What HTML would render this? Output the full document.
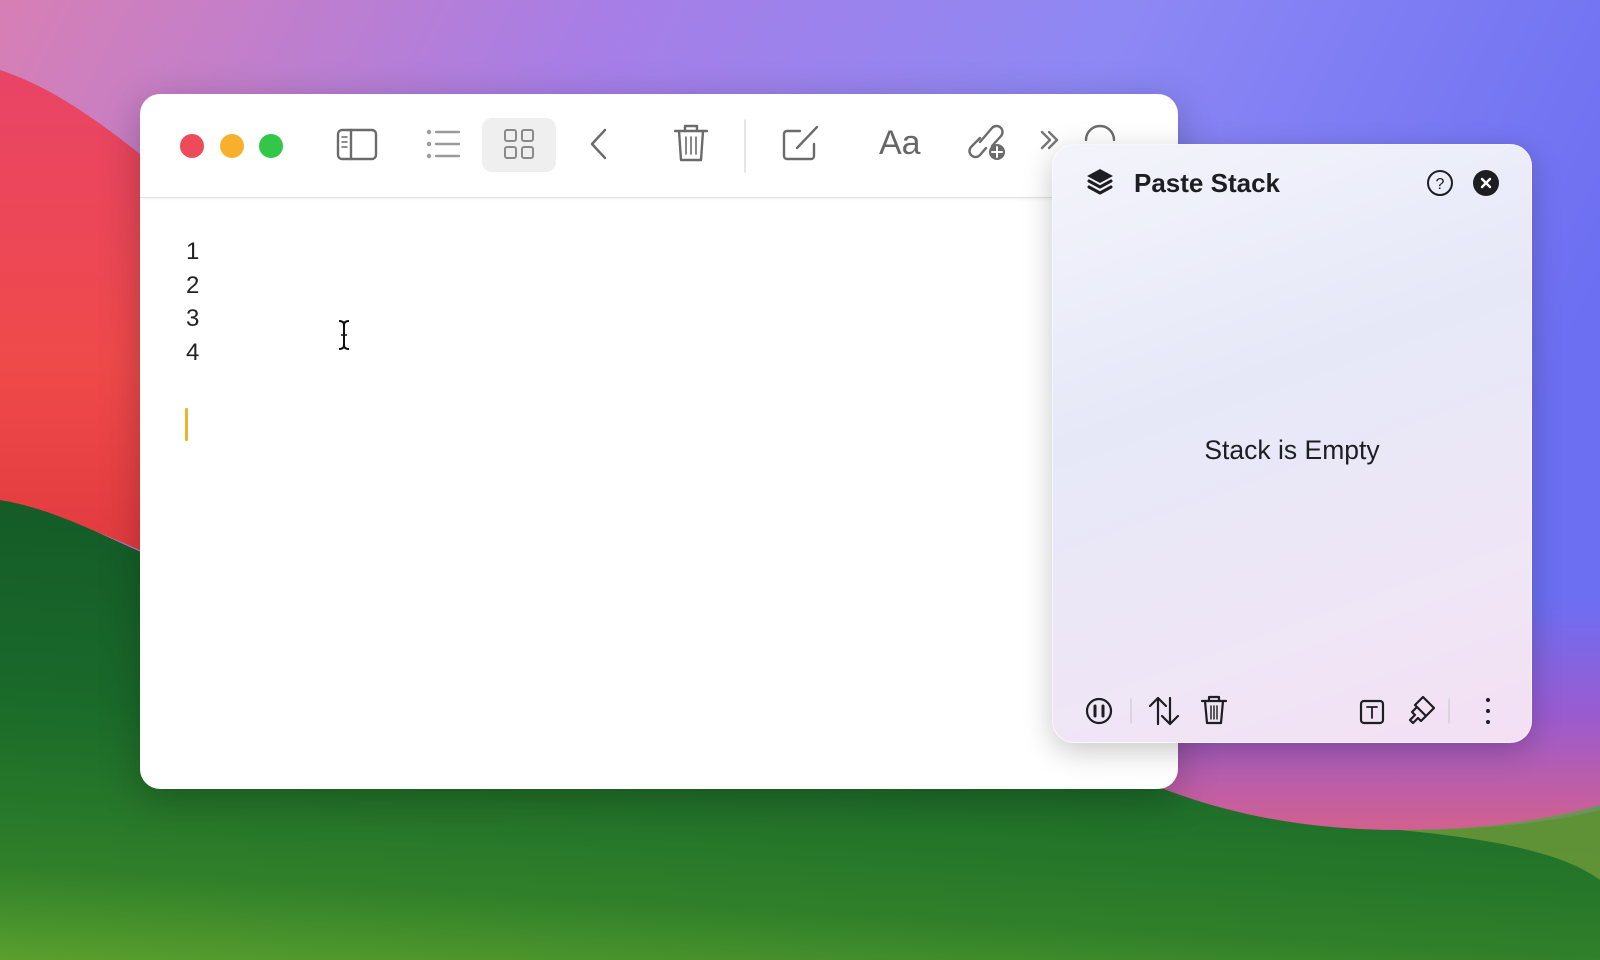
<!DOCTYPE html>
<html><head><meta charset="utf-8">
<style>
*{margin:0;padding:0;box-sizing:border-box}
html,body{width:1600px;height:960px;overflow:hidden;font-family:"Liberation Sans",sans-serif}
.bg{position:absolute;left:0;top:0}
.win{position:absolute;left:140px;top:94px;width:1038px;height:695px;background:#fff;border-radius:20px;box-shadow:0 10px 40px rgba(0,0,0,.25);overflow:hidden}
.tb{position:absolute;left:0;top:0;width:100%;height:104px;border-bottom:1px solid #e2e2e2;box-shadow:0 1px 3px rgba(0,0,0,.06)}
.dot{position:absolute;top:40px;width:24px;height:24px;border-radius:50%}
.num{position:absolute;left:46px;font-size:24px;color:#222}
.panel{position:absolute;left:1052px;top:144px;width:480px;height:599px;border-radius:22px;background:linear-gradient(160deg,#f3f4fb 0%,#e6e8f8 40%,#efe6f6 75%,#f3dff3 100%);box-shadow:0 8px 30px rgba(0,0,0,.22);border:1px solid rgba(255,255,255,.6)}
</style></head><body>
<svg class="bg" width="1600" height="960" viewBox="0 0 1600 960">
<defs>
<linearGradient id="sky" x1="0" y1="0" x2="1" y2="0.3">
<stop offset="0" stop-color="#d77fb4"/><stop offset="0.35" stop-color="#a77ee6"/><stop offset="0.65" stop-color="#8d88f4"/><stop offset="1" stop-color="#6c6ff2"/></linearGradient>
<linearGradient id="red" x1="0" y1="0" x2="0" y2="1"><stop offset="0" stop-color="#e94466"/><stop offset="0.6" stop-color="#ef4a4a"/><stop offset="1" stop-color="#e23a3f"/></linearGradient>
<linearGradient id="grn" x1="0.2" y1="0" x2="0" y2="1"><stop offset="0" stop-color="#145a28"/><stop offset="0.45" stop-color="#1a6a2a"/><stop offset="0.8" stop-color="#2f7f2a"/><stop offset="1" stop-color="#5aa02e"/></linearGradient>
<linearGradient id="mag" x1="0" y1="0" x2="0" y2="1"><stop offset="0" stop-color="#6c6ff2"/><stop offset="0.5" stop-color="#9a5bd0"/><stop offset="1" stop-color="#d2608e"/></linearGradient>
</defs>
<rect width="1600" height="960" fill="url(#sky)"/>
<path d="M0 70 C60 90 110 130 160 170 L160 560 C100 530 40 510 0 505Z" fill="url(#red)"/>
<path d="M0 500 C60 510 110 540 160 560 L1100 760 C1200 800 1300 830 1400 830 C1500 830 1560 820 1600 810 L1600 960 L0 960Z" fill="url(#grn)"/>
<path d="M1060 650 L1600 600 L1600 805 C1560 818 1500 830 1400 830 C1250 830 1150 790 1060 740Z" fill="url(#mag)"/>
<path d="M1400 830 C1500 830 1560 815 1600 805 L1600 880 C1560 850 1480 838 1400 830Z" fill="#6f9a3a" opacity=".8"/>
</svg>

<div class="win">
<div class="tb">
<div class="dot" style="left:40px;background:#ee4a5a"></div>
<div class="dot" style="left:80px;background:#f6b02e"></div>
<div class="dot" style="left:119px;background:#32c748"></div>
<svg style="position:absolute;left:0;top:0" width="1038" height="104" fill="none" stroke="#6b6b6b" stroke-width="2.4" stroke-linecap="round" stroke-linejoin="round">
<rect x="198" y="36" width="38" height="29" rx="4"/><line x1="211" y1="36" x2="211" y2="65"/>
<line x1="202" y1="43" x2="207" y2="43" stroke-width="1.5"/><line x1="202" y1="48" x2="207" y2="48" stroke-width="1.5"/><line x1="202" y1="53" x2="207" y2="53" stroke-width="1.5"/>
<g stroke="#9a9a9a"><circle cx="289" cy="38" r="1"/><circle cx="289" cy="50" r="1"/><circle cx="289" cy="62" r="1"/>
<line x1="296" y1="38" x2="319" y2="38"/><line x1="296" y1="50" x2="319" y2="50"/><line x1="296" y1="62" x2="319" y2="62"/></g>
<rect x="342" y="24" width="74" height="54" rx="10" fill="#efefef" stroke="none"/>
<g stroke="#8a8a8a" stroke-width="2"><rect x="365" y="36" width="11" height="11" rx="2"/><rect x="382" y="36" width="11" height="11" rx="2"/><rect x="365" y="53" width="11" height="11" rx="2"/><rect x="382" y="53" width="11" height="11" rx="2"/></g>
<path d="M465 36 L452 50 L465 64"/>
<g><line x1="535" y1="37" x2="567" y2="37"/><path d="M545 37 V32 H557 V37"/><path d="M539 37 L541 66 H561 L563 37"/><line x1="546" y1="43" x2="546" y2="60" stroke-width="1.6"/><line x1="551" y1="43" x2="551" y2="60" stroke-width="1.6"/><line x1="556" y1="43" x2="556" y2="60" stroke-width="1.6"/></g>
<line x1="605" y1="26" x2="605" y2="78" stroke="#ddd" stroke-width="1.5"/>
<path d="M660 37 H647 a3 3 0 0 0 -3 3 V62 a3 3 0 0 0 3 3 H671 a3 3 0 0 0 3 -3 V50"/><path d="M657 54 L677 33"/>
<path d="M840 48 L852 34 a6 6 0 0 1 9 8 L852 52 M846 54 L840 61 a6 6 0 0 1 -9 -8 L840 44"/>
<circle cx="857" cy="58" r="8" fill="#6b6b6b" stroke="none"/><path d="M857 53 V63 M852 58 H862" stroke="#fff" stroke-width="2"/>
<path d="M902 38 L910 46 L902 54 M909 38 L917 46 L909 54" stroke="#777"/>
<path d="M946 46 a14 14 0 0 1 28 0"/>
</svg>
<div style="position:absolute;left:739px;top:30px;font-size:34px;color:#666">Aa</div>
</div>
<div class="num" style="top:144px">1</div>
<div class="num" style="top:178px">2</div>
<div class="num" style="top:211px">3</div>
<div class="num" style="top:245px">4</div>
<div style="position:absolute;left:45px;top:314px;width:3px;height:33px;background:#f0b429;border-radius:1px"></div>
<svg style="position:absolute;left:196px;top:225px" width="16" height="32" fill="none" stroke="#111" stroke-width="2"><path d="M3 2 Q8 2 8 6 Q8 2 13 2 M8 6 V26 M3 30 Q8 30 8 26 Q8 30 13 30"/><path d="M5 16 H11" stroke-width="1.5"/></svg>
</div>

<div class="panel">
<svg style="position:absolute;left:30px;top:22px" width="34" height="32" viewBox="0 0 34 32"><path d="M17 2 L30 9 L17 16 L4 9Z" fill="#1d1d22"/><path d="M6 14 L17 20 L28 14 M6 20 L17 26 L28 20" fill="none" stroke="#1d1d22" stroke-width="3" stroke-linejoin="round" stroke-linecap="round"/></svg>
<div style="position:absolute;left:81px;top:23px;font-size:26px;font-weight:bold;color:#1d1d22">Paste Stack</div>
<svg style="position:absolute;left:373px;top:24px" width="28" height="28"><circle cx="14" cy="14" r="12" fill="none" stroke="#1d1d22" stroke-width="2"/><text x="14" y="20" text-anchor="middle" font-size="16" font-family="Liberation Sans" fill="#1d1d22">?</text></svg>
<svg style="position:absolute;left:419px;top:24px" width="28" height="28"><circle cx="14" cy="14" r="13" fill="#1d1d22"/><path d="M10 10 L18 18 M18 10 L10 18" stroke="#fff" stroke-width="2.4" stroke-linecap="round"/></svg>
<div style="position:absolute;left:0;width:100%;top:290px;text-align:center;font-size:26.5px;color:#1d1d22">Stack is Empty</div>
<svg style="position:absolute;left:0;top:540px" width="480" height="50" fill="none" stroke="#1d1d22" stroke-width="2.2" stroke-linecap="round" stroke-linejoin="round">
<circle cx="46" cy="26" r="12"/><line x1="42" y1="21" x2="42" y2="31" stroke-width="3"/><line x1="50" y1="21" x2="50" y2="31" stroke-width="3"/>
<line x1="78" y1="14" x2="78" y2="38" stroke="#ccc" stroke-width="1.2"/>
<path d="M105 39 V13 M97 21 L105 13 L113 21 M117 13 V39 M109 31 L117 39 L125 31"/>
<line x1="149" y1="16" x2="173" y2="16"/><path d="M156 16 V12 H166 V16"/><path d="M152 16 L154 38 H168 L170 16"/><line x1="158" y1="21" x2="158" y2="34" stroke-width="1.4"/><line x1="161" y1="21" x2="161" y2="34" stroke-width="1.4"/><line x1="164" y1="21" x2="164" y2="34" stroke-width="1.4"/>
<rect x="308" y="16" width="22" height="22" rx="3"/><path d="M314 22 H324 M319 22 V33" stroke-width="1.8"/>
<path d="M362 20 L370 12 L381 23 L373 31 Z M364 22 L359 27 L362 30 L357 35 L360 38 L365 33 L368 36 L373 31"/>
<line x1="396" y1="14" x2="396" y2="38" stroke="#ccc" stroke-width="1.2"/>
<circle cx="435" cy="15" r="2" fill="#1d1d22" stroke="none"/><circle cx="435" cy="26" r="2" fill="#1d1d22" stroke="none"/><circle cx="435" cy="37" r="2" fill="#1d1d22" stroke="none"/>
</svg>
</div>
</body></html>
